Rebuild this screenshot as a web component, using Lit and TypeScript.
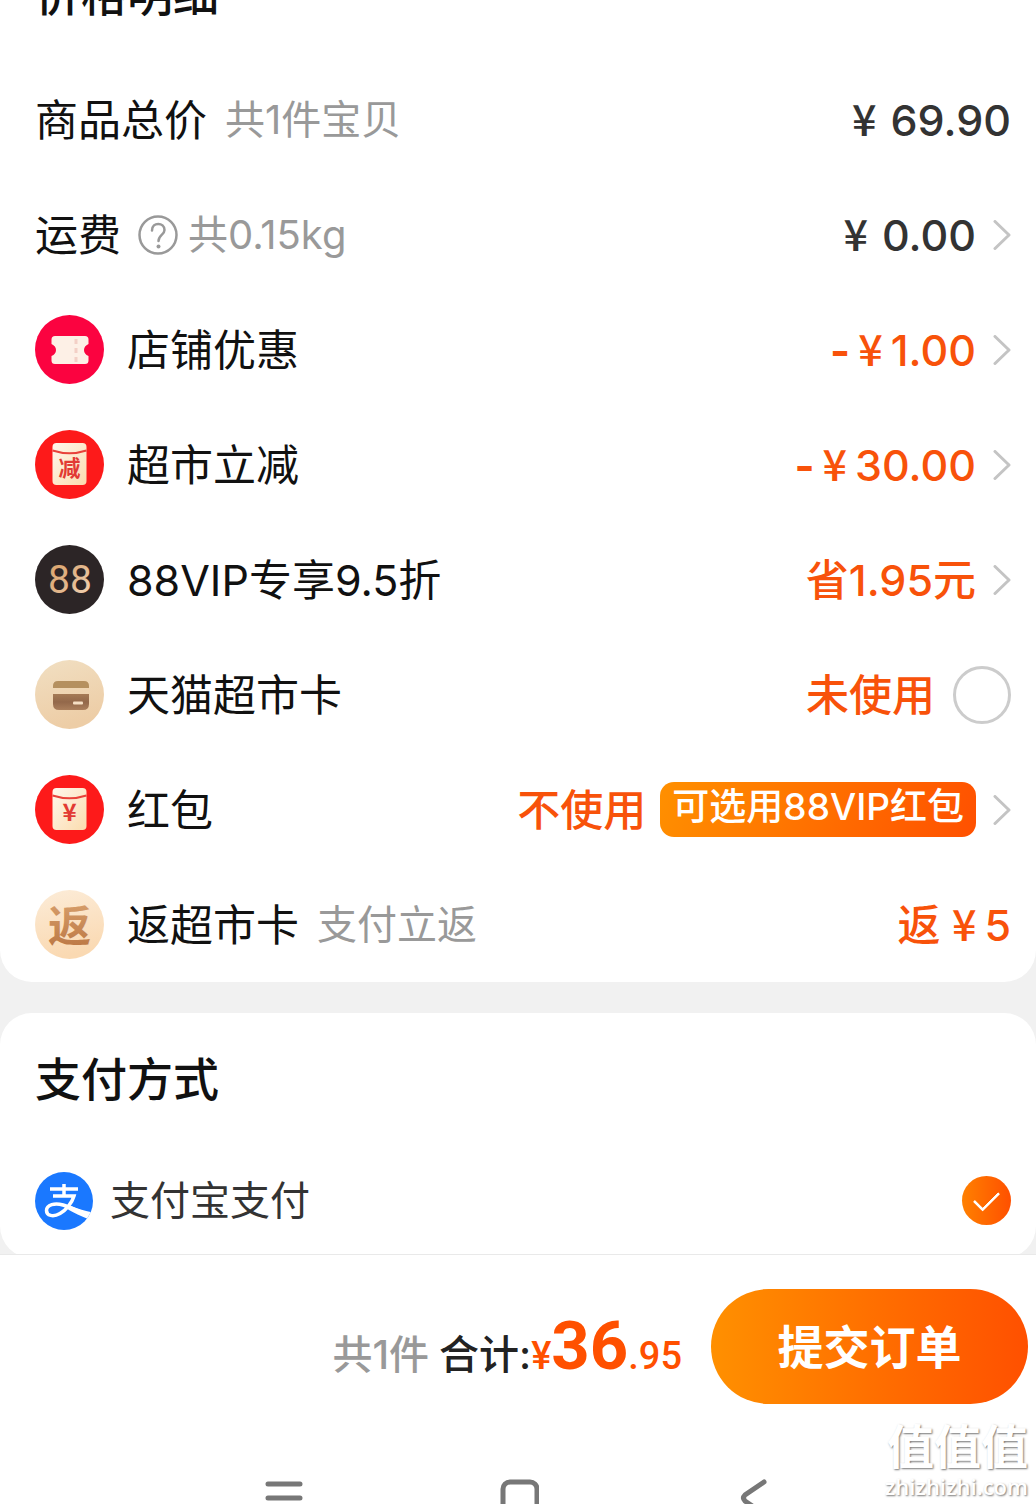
import { LitElement, html, svg, css, nothing, type TemplateResult } from "lit";
import { customElement, state } from "lit/decorators.js";

type Row = {
  id: string;
  label: string;
  icon?: TemplateResult;
  help?: boolean;
  hint?: string;
  value: string;
  accent?: boolean;
  badge?: string;
  end: "none" | "arrow" | "toggle";
};

const envelope = (mark: string, size: number) => svg`
  <defs>
    <linearGradient id="paper" x1="0" y1="0" x2="1" y2="1">
      <stop offset="0" stop-color="#fff6ec"/><stop offset="1" stop-color="#fbdcae"/>
    </linearGradient>
  </defs>
  <circle cx="34.5" cy="34.5" r="34.5" fill="#fd1a1a"/>
  <rect x="17.500" y="13" width="34" height="42" rx="4" fill="url(#paper)"/>
  <path d="M17.500 20.500 Q34.5 26 51.500 20.500" fill="none" stroke="#e8413a" stroke-width="2"/>
  <text class="mark" x="34.5" y="46" font-size=${size} fill="#e23a34" text-anchor="middle">${mark}</text>`;

const icons = {
  ticket: html`<svg class="icon" viewBox="0 0 69 69" aria-hidden="true">
    <circle cx="34.5" cy="34.5" r="34.5" fill="#fb0340"/>
    <path d="M20 21 H50 Q53.500 21 53.500 24.500 V29 Q49 31 49 35 Q49 39 53.500 41 V45.500 Q53.500 49 50 49 H20 Q16.500 49 16.500 45.500 V41 Q21 39 21 35 Q21 31 16.500 29 V24.500 Q16.500 21 20 21 Z" fill="#fdf0e6"/>
    <path d="M41 24 V48" fill="none" stroke="#f3d0c6" stroke-width="3" stroke-dasharray="5 4"/>
  </svg>`,
  cut: html`<svg class="icon" viewBox="0 0 69 69" aria-hidden="true">${envelope("减", 22)}</svg>`,
  red: html`<svg class="icon" viewBox="0 0 69 69" aria-hidden="true">${envelope("¥", 24)}</svg>`,
  vip: html`<svg class="icon" viewBox="0 0 69 69" aria-hidden="true">
    <defs>
      <linearGradient id="gold" x1="0" y1="0" x2="1" y2="1">
        <stop offset="0" stop-color="#d99f63"/><stop offset="0.5" stop-color="#e2b68b"/><stop offset="1" stop-color="#f8dcc0"/>
      </linearGradient>
    </defs>
    <circle cx="34.5" cy="34.5" r="34.5" fill="#2c2526"/>
    <text class="vip" x="35" y="48" font-size="39" fill="url(#gold)" text-anchor="middle">88</text>
  </svg>`,
  card: html`<svg class="icon" viewBox="0 0 69 69" aria-hidden="true">
    <defs>
      <linearGradient id="sand" x1="0" y1="0" x2="0.3" y2="1">
        <stop offset="0" stop-color="#f1dfc2"/><stop offset="1" stop-color="#edcda6"/>
      </linearGradient>
      <linearGradient id="brown" x1="0" y1="0" x2="0" y2="1">
        <stop offset="0" stop-color="#a57a55"/><stop offset="0.500" stop-color="#93684a"/><stop offset="1" stop-color="#ab7f5c"/>
      </linearGradient>
    </defs>
    <circle cx="34.5" cy="34.5" r="34.5" fill="url(#sand)"/>
    <path d="M18 28 V26 Q18 21 23 21 H49 Q54 21 54 26 V28 Z" fill="#b5905f"/>
    <path d="M18 34 H54 V44 Q54 50 48 50 H24 Q18 50 18 44 Z" fill="url(#brown)"/>
    <rect x="38" y="41.500" width="10" height="3" rx="1" fill="#f5dfc4"/>
  </svg>`,
  back: html`<svg class="icon" viewBox="0 0 69 69" aria-hidden="true">
    <defs>
      <linearGradient id="cream" x1="0" y1="0" x2="0.2" y2="1">
        <stop offset="0" stop-color="#fcecd8"/><stop offset="1" stop-color="#fad9b2"/>
      </linearGradient>
      <linearGradient id="copper" x1="0" y1="0" x2="0" y2="1">
        <stop offset="0" stop-color="#dca673"/><stop offset="1" stop-color="#b9733f"/>
      </linearGradient>
    </defs>
    <circle cx="34.5" cy="34.5" r="34.5" fill="url(#cream)"/>
    <text class="mark" x="34.5" y="52" font-size="43" fill="url(#copper)" text-anchor="middle">返</text>
  </svg>`,
};

const arrow = html`<svg class="arrow" viewBox="0 0 18 30" aria-hidden="true">
  <path d="M2 1.500 L16 15 L2 28.500" fill="none" stroke="#c4c4c4" stroke-width="3" stroke-linecap="round" stroke-linejoin="round"/>
</svg>`;

const rows: Row[] = [
  { id: "goods", label: "商品总价", hint: "共1件宝贝", value: "¥ 69.90", end: "none" },
  { id: "ship", label: "运费", help: true, hint: "共0.15kg", value: "¥ 0.00", end: "arrow" },
  { id: "shop", label: "店铺优惠", icon: icons.ticket, value: "-¥1.00", accent: true, end: "arrow" },
  { id: "cut", label: "超市立减", icon: icons.cut, value: "-¥30.00", accent: true, end: "arrow" },
  { id: "vip", label: "88VIP专享9.5折", icon: icons.vip, value: "省1.95元", accent: true, end: "arrow" },
  { id: "card", label: "天猫超市卡", icon: icons.card, value: "未使用", accent: true, end: "toggle" },
  { id: "red", label: "红包", icon: icons.red, value: "不使用", accent: true, badge: "可选用88VIP红包", end: "arrow" },
  { id: "back", label: "返超市卡", icon: icons.back, hint: "支付立返", value: "返 ¥5", accent: true, end: "none" },
];

@customElement("app-root")
export class AppRoot extends LitElement {
  static styles = css`
    :host {
      display: flex;
      flex-direction: column;
      position: relative;
      height: 100vh;
      overflow: hidden;
      background: #f1f1f1;
      color: #111;
      font-family: Inter, "Noto Sans CJK SC", sans-serif;
      font-size: 43px;
      line-height: 56px;
    }
    * { box-sizing: border-box; }
    button {
      border: 0;
      padding: 0;
      background: none;
      color: inherit;
      font: inherit;
      text-align: left;
      cursor: pointer;
    }
    .panel {
      flex: none;
      background: #fff;
      border-radius: 32px;
      overflow: hidden;
    }
    .prices { margin-top: -70px; }
    .payment { margin-top: 31px; padding-bottom: 2px; }
    .title {
      margin: 0;
      padding: 38px 35px;
      font-size: 46px;
      font-weight: 500;
      line-height: 56px;
    }
    .prices .title { padding-top: 36px; padding-bottom: 40px; }
    .list { margin: 0; padding: 0; list-style: none; }
    .row {
      display: flex;
      align-items: center;
      width: 100%;
      height: 115px;
      padding: 0 25px 0 35px;
      white-space: nowrap;
    }
    .icon { flex: none; width: 69px; height: 69px; margin-right: 23px; }
    .mark { font-family: "Noto Sans CJK SC", sans-serif; font-weight: 700; }
    .vip { font-family: Roboto, sans-serif; font-weight: 400; }
    .hint { margin-left: 18px; color: #999; font-size: 40px; }
    .help { width: 40px; height: 40px; margin-left: 17px; }
    .help + .hint { margin-left: 10px; }
    .value { margin-left: auto; color: #333; font-weight: 500; }
    .accent { color: #f8520a; }
    .minus { margin-right: 8px; font-weight: 700; }
    .yen { margin-right: 8px; font-family: "Noto Sans CJK SC", sans-serif; line-height: 0; }
    .wide { margin-right: 14px; }
    .badge {
      height: 55px;
      margin-left: 14px;
      padding: 0 12px;
      border-radius: 14px;
      background: linear-gradient(110deg, #ff9000, #ff5000);
      color: #fff;
      font-size: 37px;
      font-weight: 500;
      line-height: 50px;
    }
    .arrow { flex: none; width: 18px; height: 30px; margin-left: 17px; }
    .toggle {
      appearance: none;
      flex: none;
      width: 58px;
      height: 58px;
      margin: 0 0 0 18px;
      border: 3px solid #ccc;
      border-radius: 50%;
    }
    .toggle:checked { border: 16px solid #ff6a00; }
    .method { height: 111px; color: #333; font-size: 40px; }
    .alipay { flex: none; width: 58px; height: 58px; margin-right: 17px; }
    .choice {
      appearance: none;
      width: 49px;
      height: 49px;
      margin: 0 0 0 auto;
      border-radius: 50%;
      display: grid;
      place-items: center;
      background: linear-gradient(90deg, #ff8000, #ff5000);
    }
    .choice::before {
      content: "";
      width: 22px;
      height: 11px;
      margin-bottom: 6px;
      border: solid #fff;
      border-width: 0 0 3px 3px;
      border-radius: 1px;
      transform: rotate(-45deg);
    }
    .footer {
      flex: none;
      position: relative;
      margin-top: -4px;
      border-top: 1px solid #e9e9e9;
      background: #fff;
    }
    .checkout {
      display: flex;
      align-items: center;
      justify-content: flex-end;
      padding: 34px 8px 0 35px;
    }
    .sum {
      display: flex;
      align-items: baseline;
      margin: 0;
      padding-top: 8px;
      color: #222;
      font-size: 40px;
      font-weight: 500;
    }
    .count { margin-right: 10px; color: #999; }
    .money { display: flex; align-items: baseline; color: #ff5000; font-family: Roboto, sans-serif; font-size: 38px; }
    .whole { font-size: 67px; font-weight: 700; }
    .submit {
      width: 317px;
      height: 115px;
      margin-left: 29px;
      border-radius: 58px;
      background: linear-gradient(90deg, #ff9000, #ff5000);
      color: #fff;
      font-size: 46px;
      font-weight: 700;
      text-align: center;
    }
    .system {
      display: flex;
      justify-content: space-around;
      align-items: center;
      height: 190px;
      padding: 0 165px 0 167px;
    }
    .key { display: flex; }
    .glyph { width: 40px; height: 44px; }
    .watermark {
      position: absolute;
      right: 8px;
      bottom: 5px;
      display: flex;
      flex-direction: column;
      align-items: flex-end;
      color: #fff;
      text-shadow: 1px 1px 2px #777;
      pointer-events: none;
    }
    .stamp { font-size: 47px; font-weight: 700; line-height: 52px; }
    .site { font-family: "Open Sans", sans-serif; font-size: 22px; font-weight: 600; line-height: 26px; }
  `;

  @state() private useCard = false;

  private money(text: string) {
    const m = /^(-?)(返 )?¥( ?)(.+)$/.exec(text);
    if (!m) return text;
    return html`${m[1] ? html`<span class="minus">-</span>` : nothing}${m[2] ?? nothing}<span class="yen ${m[3] ? "wide" : ""}">¥</span>${m[4]}`;
  }

  private body(r: Row) {
    return html`
      ${r.icon ?? nothing}
      <span>${r.label}</span>
      ${r.help
        ? html`<svg class="help" viewBox="0 0 40 40" role="img" aria-label="说明">
            <circle cx="20" cy="20" r="18.500" fill="none" stroke="#999" stroke-width="2.500"/>
            <path d="M14 15.500 C14 6.500 26.500 7 26.500 15 C26.500 20 20.500 20 20.500 26" fill="none" stroke="#999" stroke-width="2.500" stroke-linecap="round"/>
            <circle cx="20.500" cy="31.500" r="2" fill="#999"/>
          </svg>`
        : nothing}
      ${r.hint ? html`<span class="hint">${r.hint}</span>` : nothing}
      <span class="value ${r.accent ? "accent" : ""}">${this.money(r.value)}</span>
      ${r.badge ? html`<span class="badge">${r.badge}</span>` : nothing}
      ${r.end === "arrow" ? arrow : nothing}
      ${r.end === "toggle"
        ? html`<input class="toggle" type="checkbox" .checked=${this.useCard}
            @change=${(e: Event) => (this.useCard = (e.target as HTMLInputElement).checked)} />`
        : nothing}
    `;
  }

  private row(r: Row) {
    if (r.end === "arrow") return html`<button class="row" type="button">${this.body(r)}</button>`;
    if (r.end === "toggle") return html`<label class="row">${this.body(r)}</label>`;
    return html`<div class="row">${this.body(r)}</div>`;
  }

  render() {
    return html`
      <section class="panel prices">
        <h2 class="title">价格明细</h2>
        <ul class="list">${rows.map((r) => html`<li>${this.row(r)}</li>`)}</ul>
      </section>
      <section class="panel payment">
        <h2 class="title">支付方式</h2>
        <label class="row method">
          <svg class="alipay" viewBox="0 0 58 58" aria-hidden="true">
            <defs><clipPath id="disc"><circle cx="29" cy="29" r="29"/></clipPath></defs>
            <g clip-path="url(#disc)">
              <rect width="58" height="58" fill="#1a78ff"/>
              <g fill="none" stroke="#fff" stroke-width="3.500">
                <path d="M15 17 H43 M29 12 V24"/>
                <path d="M18 24 H39 C37 31 31 38 25 41.500 C18 45.500 11.500 43.500 11.500 38.500 C11.500 32.500 20 30.500 28 33 C35 35.200 44 39.500 52 42.500"/>
              </g>
              <path d="M36 34 C43 37 50 39 58 40.500 L53 47 C46 44 39 41 33 37.500 Z" fill="#fff"/>
            </g>
          </svg>
          <span>支付宝支付</span>
          <input class="choice" type="radio" name="method" checked />
        </label>
      </section>
      <footer class="footer">
        <div class="checkout">
          <p class="sum">
            <span class="count">共1件</span><span>合计:</span>
            <span class="money"><span>¥</span><span class="whole">36</span><span>.95</span></span>
          </p>
          <button class="submit" type="button">提交订单</button>
        </div>
        <nav class="system">
          <button class="key" type="button" aria-label="菜单">
            <svg class="glyph" viewBox="0 0 40 44"><path d="M4 7 H36 M4 21 H36 M4 35 H36" fill="none" stroke="#777" stroke-width="5" stroke-linecap="round"/></svg>
          </button>
          <button class="key" type="button" aria-label="主页">
            <svg class="glyph" viewBox="0 0 40 44"><rect x="4" y="5" width="34" height="34" rx="7" fill="none" stroke="#777" stroke-width="5"/></svg>
          </button>
          <button class="key" type="button" aria-label="返回">
            <svg class="glyph" viewBox="0 0 40 44"><path d="M30 5 L11 18 Q8 21 11 24 L30 37" fill="none" stroke="#777" stroke-width="5" stroke-linecap="round"/></svg>
          </button>
        </nav>
      </footer>
      <div class="watermark"><span class="stamp">值值值</span><span class="site">zhizhizhi.com</span></div>
    `;
  }
}
